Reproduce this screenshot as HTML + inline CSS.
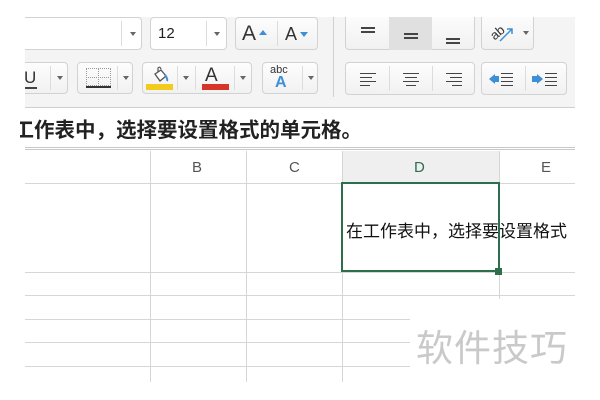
<!DOCTYPE html>
<html><head><meta charset="utf-8"><style>
*{margin:0;padding:0;box-sizing:border-box}
body{width:600px;height:400px;background:#fff;position:relative;overflow:hidden;font-family:"Liberation Sans","Noto Sans CJK SC",sans-serif}
.abs{position:absolute}
.tb{left:25px;top:17px;width:550px;height:91px;background:#f4f4f4;border-bottom:1px solid #cfcfcf}
.btn{position:absolute;background:linear-gradient(#fdfdfd,#f1f1f1);border:1px solid #d2d2d2;border-radius:4px}
.arr{position:absolute;width:0;height:0;border-left:3px solid transparent;border-right:3px solid transparent;border-top:4px solid #666}
.sep{position:absolute;top:3px;bottom:3px;width:1px;background:#dcdcdc}
.ln{position:absolute;height:1.5px;background:#444}
.v{position:absolute;width:1px;background:#d6d6d6}
.h{position:absolute;height:1px;background:#d6d6d6}
</style></head><body>
<div class="abs tb"></div>
<div class="btn" style="left:15px;top:17px;width:127px;height:33px;background:#fff"><div class="sep" style="left:105px"></div><div class="arr" style="left:114px;top:14px"></div></div>
<div class="btn" style="left:150px;top:17px;width:77px;height:33px;background:#fff"><span class="abs" style="left:7px;top:7px;font-size:15px;color:#222">12</span><div class="sep" style="left:55px"></div><div class="arr" style="left:63px;top:14px"></div></div>
<div class="btn" style="left:235px;top:17px;width:83px;height:33px"><div class="sep" style="left:41px"></div>
<span class="abs" style="left:6px;top:4px;font-size:21px;color:#333">A</span><div class="abs" style="left:23px;top:12px;border-left:4px solid transparent;border-right:4px solid transparent;border-bottom:5px solid #3d8fd6"></div>
<span class="abs" style="left:49px;top:6px;font-size:18px;color:#333">A</span><div class="abs" style="left:64px;top:14px;border-left:4px solid transparent;border-right:4px solid transparent;border-top:5px solid #3d8fd6"></div></div>
<div class="btn" style="left:15px;top:62px;width:53px;height:32px"><span class="abs" style="left:8px;top:5px;font-size:17px;color:#333">U</span><div class="ln" style="left:7px;top:24px;width:14px"></div><div class="sep" style="left:34px"></div><div class="arr" style="left:41px;top:13px"></div></div>
<div class="btn" style="left:77px;top:62px;width:56px;height:32px"><div class="abs" style="left:8px;top:5px;width:25px;height:18px;border:1px dotted #999"></div><div class="abs" style="left:20px;top:5px;height:18px;border-left:1px dotted #999"></div><div class="abs" style="left:8px;top:14px;width:25px;border-top:1px dotted #999"></div><div class="ln" style="left:8px;top:23px;width:25px;background:#333"></div><div class="sep" style="left:39px"></div><div class="arr" style="left:45px;top:13px"></div></div>
<div class="btn" style="left:142px;top:62px;width:110px;height:32px"><svg class="abs" style="left:7px;top:3px" width="20" height="18"><path d="M5 8 L11 4 L16 10 L10 15 Z" fill="#fff" stroke="#555" stroke-width="1.3"/><path d="M8 6 L8 2 Q10 0 11 3" fill="none" stroke="#555" stroke-width="1.2"/><path d="M15 9 Q18 13 17 15" stroke="#3d8fd6" stroke-width="2" fill="none"/></svg><div class="abs" style="left:3px;top:21px;width:27px;height:6px;background:#f3ca1e"></div><div class="sep" style="left:34px"></div><div class="arr" style="left:40px;top:13px"></div><div class="sep" style="left:52px"></div>
<span class="abs" style="left:62px;top:2px;font-size:19px;color:#333">A</span><div class="abs" style="left:59px;top:21px;width:27px;height:6px;background:#d6362a"></div><div class="sep" style="left:91px"></div><div class="arr" style="left:97px;top:13px"></div></div>
<div class="btn" style="left:262px;top:62px;width:56px;height:32px"><span class="abs" style="left:7px;top:1px;font-size:11px;color:#333">abc</span><span class="abs" style="left:12px;top:11px;font-size:16px;font-weight:bold;color:#3d8fd6">A</span><div class="sep" style="left:39px"></div><div class="arr" style="left:45px;top:13px"></div></div>
<div class="abs" style="left:333px;top:17px;width:1px;height:80px;background:#d0d0d0"></div>
<div class="btn" style="left:345px;top:12px;width:130px;height:38px"><div class="abs" style="left:43px;top:0;width:43px;height:37px;background:#e0e0e0"></div>
<div class="ln" style="left:15px;top:14px;width:14px"></div><div class="ln" style="left:15px;top:18px;width:14px"></div>
<div class="ln" style="left:58px;top:20px;width:14px"></div><div class="ln" style="left:58px;top:24px;width:14px"></div>
<div class="ln" style="left:100px;top:25px;width:14px"></div><div class="ln" style="left:100px;top:29px;width:14px"></div></div>
<div class="btn" style="left:481px;top:12px;width:53px;height:38px"><span class="abs" style="left:8px;top:12px;font-size:13px;color:#333;transform:rotate(-40deg)">ab</span><svg class="abs" style="left:16px;top:12px" width="18" height="18"><path d="M2 16 L14 4 M9 4 H14 V9" stroke="#3d8fd6" stroke-width="1.5" fill="none"/></svg><div class="arr" style="left:41px;top:18px"></div></div>
<div class="btn" style="left:345px;top:62px;width:130px;height:33px"><div class="sep" style="left:43px"></div><div class="sep" style="left:86px"></div>
<div class="ln" style="left:14px;top:10px;width:16px;height:1px"></div><div class="ln" style="left:14px;top:14px;width:12px;height:1px"></div><div class="ln" style="left:14px;top:18px;width:16px;height:1px"></div><div class="ln" style="left:14px;top:22px;width:10px;height:1px"></div>
<div class="ln" style="left:57px;top:10px;width:16px;height:1px"></div><div class="ln" style="left:59px;top:14px;width:12px;height:1px"></div><div class="ln" style="left:57px;top:18px;width:16px;height:1px"></div><div class="ln" style="left:60px;top:22px;width:10px;height:1px"></div>
<div class="ln" style="left:100px;top:10px;width:16px;height:1px"></div><div class="ln" style="left:104px;top:14px;width:12px;height:1px"></div><div class="ln" style="left:100px;top:18px;width:16px;height:1px"></div><div class="ln" style="left:106px;top:22px;width:10px;height:1px"></div></div>
<div class="btn" style="left:481px;top:62px;width:86px;height:33px"><div class="sep" style="left:43px"></div>
<div class="abs" style="left:7px;top:11px;border-top:5px solid transparent;border-bottom:5px solid transparent;border-right:6px solid #3d8fd6"></div><div class="abs" style="left:12px;top:13px;width:5px;height:6px;background:#3d8fd6"></div>
<div class="ln" style="left:19px;top:10px;width:12px;height:1px"></div><div class="ln" style="left:19px;top:14px;width:12px;height:1px"></div><div class="ln" style="left:19px;top:18px;width:12px;height:1px"></div><div class="ln" style="left:19px;top:22px;width:12px;height:1px"></div>
<div class="abs" style="left:50px;top:13px;width:5px;height:6px;background:#3d8fd6"></div><div class="abs" style="left:55px;top:11px;border-top:5px solid transparent;border-bottom:5px solid transparent;border-left:6px solid #3d8fd6"></div>
<div class="ln" style="left:63px;top:10px;width:12px;height:1px"></div><div class="ln" style="left:63px;top:14px;width:12px;height:1px"></div><div class="ln" style="left:63px;top:18px;width:12px;height:1px"></div><div class="ln" style="left:63px;top:22px;width:12px;height:1px"></div></div>
<div class="abs" style="left:0;top:0;width:25px;height:108px;background:#fff"></div>
<div class="abs" style="left:575px;top:0;width:25px;height:108px;background:#fff"></div>
<div class="abs" style="left:0;top:0;width:600px;height:17px;background:#fff"></div>
<div class="abs" style="left:20px;top:112px;width:560px;height:32px;overflow:hidden"><span class="abs" style="left:-27px;top:1px;font-size:20.5px;font-weight:bold;color:#222;white-space:nowrap">在工作表中，选择要设置格式的单元格。</span></div>
<div class="abs" style="left:25px;top:147px;width:550px;height:3px;border-top:1px solid #c8c8c8;border-bottom:1px solid #c8c8c8"></div>
<div class="abs" style="left:342px;top:151px;width:158px;height:32px;background:#efefef"></div>
<div class="h" style="left:25px;top:183px;width:550px"></div>
<span class="abs" style="left:192px;top:159px;font-size:15px;color:#555">B</span>
<span class="abs" style="left:289px;top:159px;font-size:15px;color:#555">C</span>
<span class="abs" style="left:414px;top:159px;font-size:15px;color:#2d6e4d">D</span>
<span class="abs" style="left:541px;top:159px;font-size:15px;color:#555">E</span>
<div class="v" style="left:150px;top:151px;height:231px"></div>
<div class="v" style="left:246px;top:151px;height:231px"></div>
<div class="v" style="left:342px;top:151px;height:231px"></div>
<div class="v" style="left:499px;top:151px;height:148px"></div>
<div class="h" style="left:25px;top:272px;width:550px"></div>
<div class="h" style="left:25px;top:295px;width:550px"></div>
<div class="h" style="left:25px;top:319px;width:385px"></div>
<div class="h" style="left:25px;top:342px;width:385px"></div>
<div class="h" style="left:25px;top:366px;width:385px"></div>
<span class="abs" style="left:346px;top:217px;font-size:17px;color:#111;white-space:nowrap">在工作表中，选择要设置格式</span>
<div class="abs" style="left:341px;top:182px;width:159px;height:90px;border:2.5px solid #2d6e4d"></div>
<div class="abs" style="left:495px;top:268px;width:7px;height:7px;background:#2d6e4d"></div>
<span class="abs" style="left:416px;top:318px;font-size:37px;color:#c9c9c9;letter-spacing:1px">软件技巧</span>
</body></html>
